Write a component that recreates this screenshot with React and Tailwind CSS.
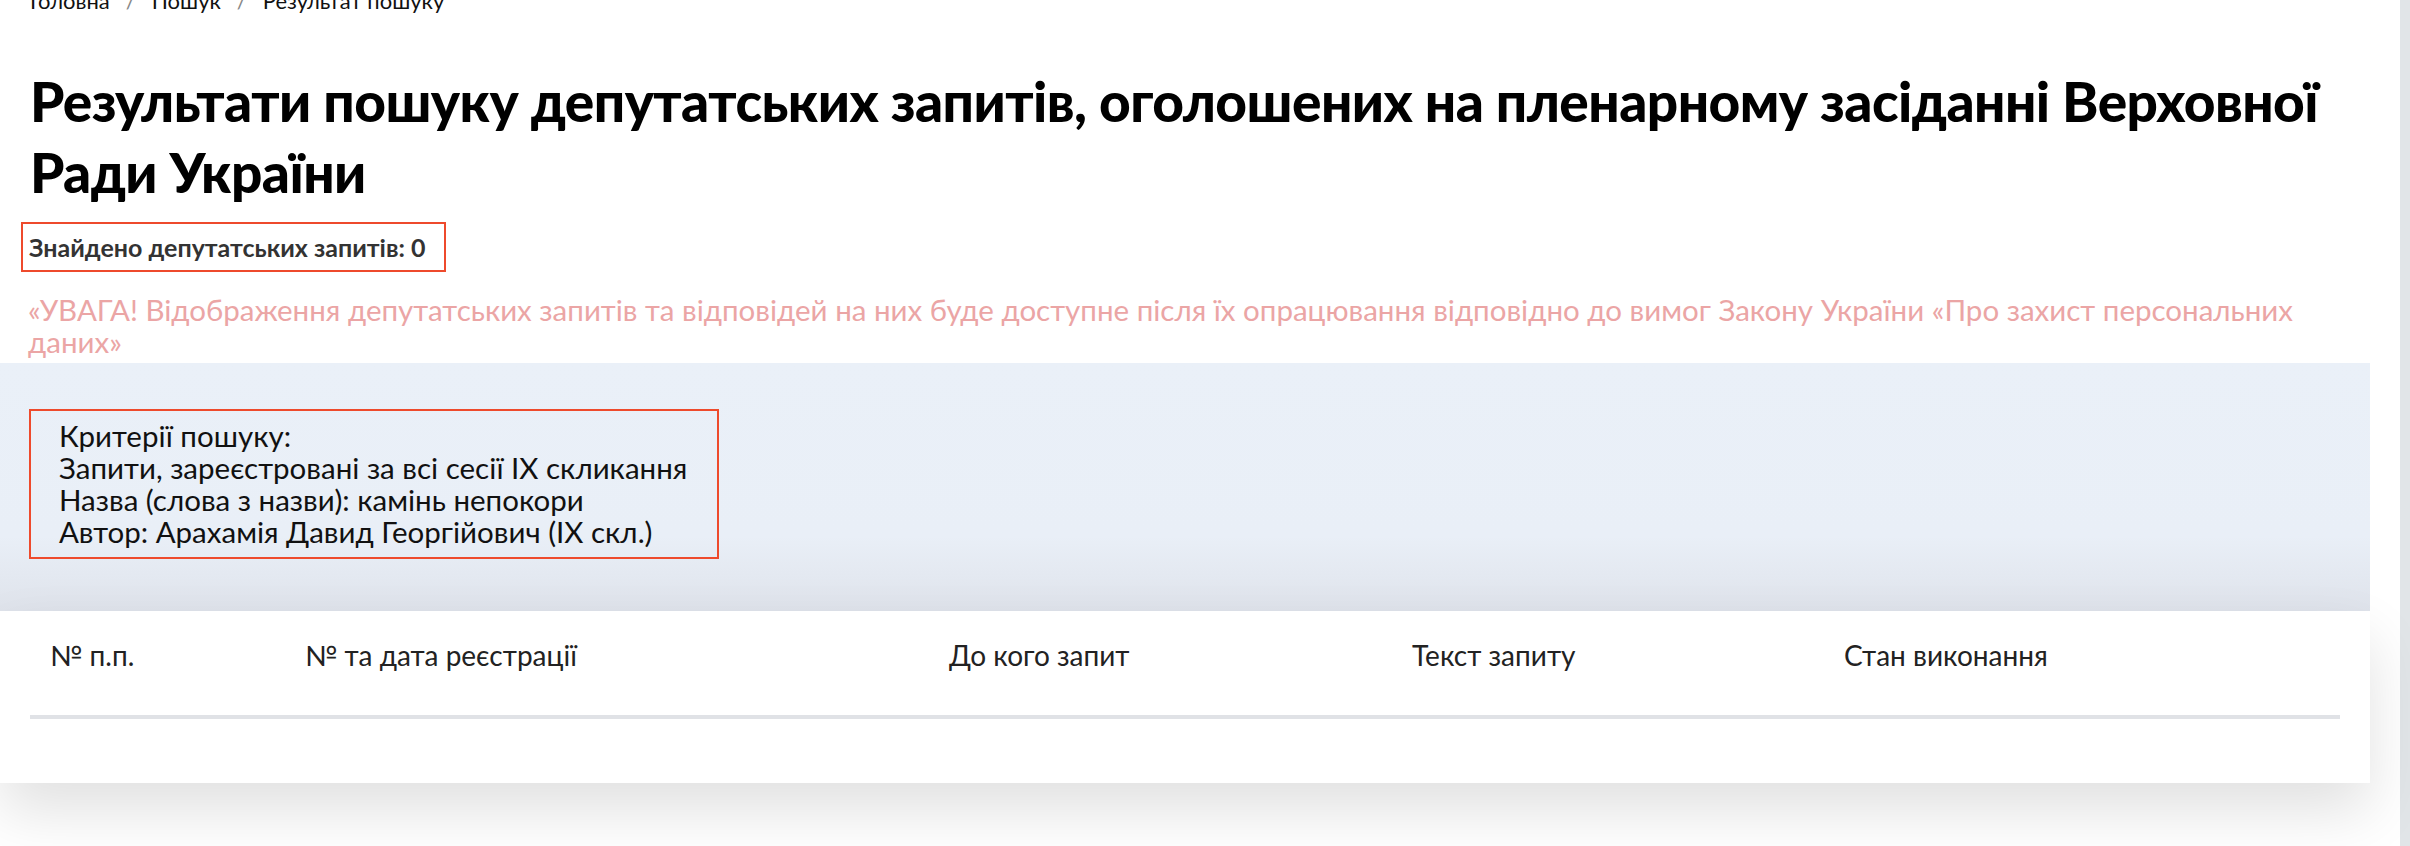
const criteria = [
  'Критерії пошуку:',
  'Запити, зареєстровані за всі сесії IX скликання',
  'Назва (слова з назви): камінь непокори',
  'Автор: Арахамія Давид Георгійович (IX скл.)',
]

const columns = [
  { title: '№ п.п.', w: 'w-[255px]' },
  { title: '№ та дата реєстрації', w: 'w-[644px]' },
  { title: 'До кого запит', w: 'w-[463px]' },
  { title: 'Текст запиту', w: 'w-[432px]' },
  { title: 'Стан виконання', w: 'flex-1' },
]

const Breadcrumbs = () => (
  <div className="-mt-[12px] flex flex-row items-center gap-x-4 pl-[30px] text-[22px] leading-[26px] text-[#111]">
    <span>Головна</span>
    <span className="text-[#888]">/</span>
    <span>Пошук</span>
    <span className="text-[#888]">/</span>
    <span>Результат пошуку</span>
  </div>
)

const ResultsTable = () => (
  <div className="relative z-10 flex flex-col bg-white px-[30px] pb-[64px] shadow-[0_28px_60px_rgba(0,0,0,0.12)]">
    <div className="flex flex-row border-b-4 border-[#e0e2e6] pt-[26px] pb-[42px] pl-[20px] text-[28px] leading-[36px] text-[#222]">
      {columns.map((c, i) => (
        <span key={i} className={c.w}>
          {c.title}
        </span>
      ))}
    </div>
  </div>
)

export default function App() {
  return (
    <div className="flex min-h-[846px] w-full flex-row overflow-hidden bg-white font-['Lato',sans-serif]">
      <div className="flex w-[2370px] flex-col">
        <Breadcrumbs />
        <h1 className="mt-[52px] pl-[30px] text-[55px] font-black leading-[71px] tracking-[-0.01em] text-black">
          Результати пошуку депутатських запитів, оголошених на пленарному засіданні Верховної Ради України
        </h1>
        <div className="mt-[14px] ml-[21px] w-[425px] border-2 border-[#ee4a2c] px-[6px] py-[8px] text-[25px] font-bold leading-[30px] text-[#333]">
          Знайдено депутатських запитів: 0
        </div>
        <p className="mt-[22px] pl-[28px] pr-[30px] text-[29.5px] leading-[32px] text-[#eba5a5]">
          «УВАГА! Відображення депутатських запитів та відповідей на них буде доступне після їх опрацювання відповідно до вимог Закону України «Про захист персональних даних»
        </p>
        <div className="mt-[5px] flex h-[248px] flex-col bg-gradient-to-b from-[#eaf0f8] via-[#e9eff7] via-70% to-[#dfe3eb] pt-[46px] pl-[29px]">
          <div className="w-[690px] border-2 border-[#ee4a2c] py-[9px] pl-[28px] text-[29.5px] leading-[32px] text-[#111]">
            {criteria.map((line, i) => (
              <div key={i}>{line}</div>
            ))}
          </div>
        </div>
        <ResultsTable />
      </div>
      <div className="w-[30px] bg-white" />
      <div className="w-[10px] bg-[#e1e5e8]" />
    </div>
  )
}
